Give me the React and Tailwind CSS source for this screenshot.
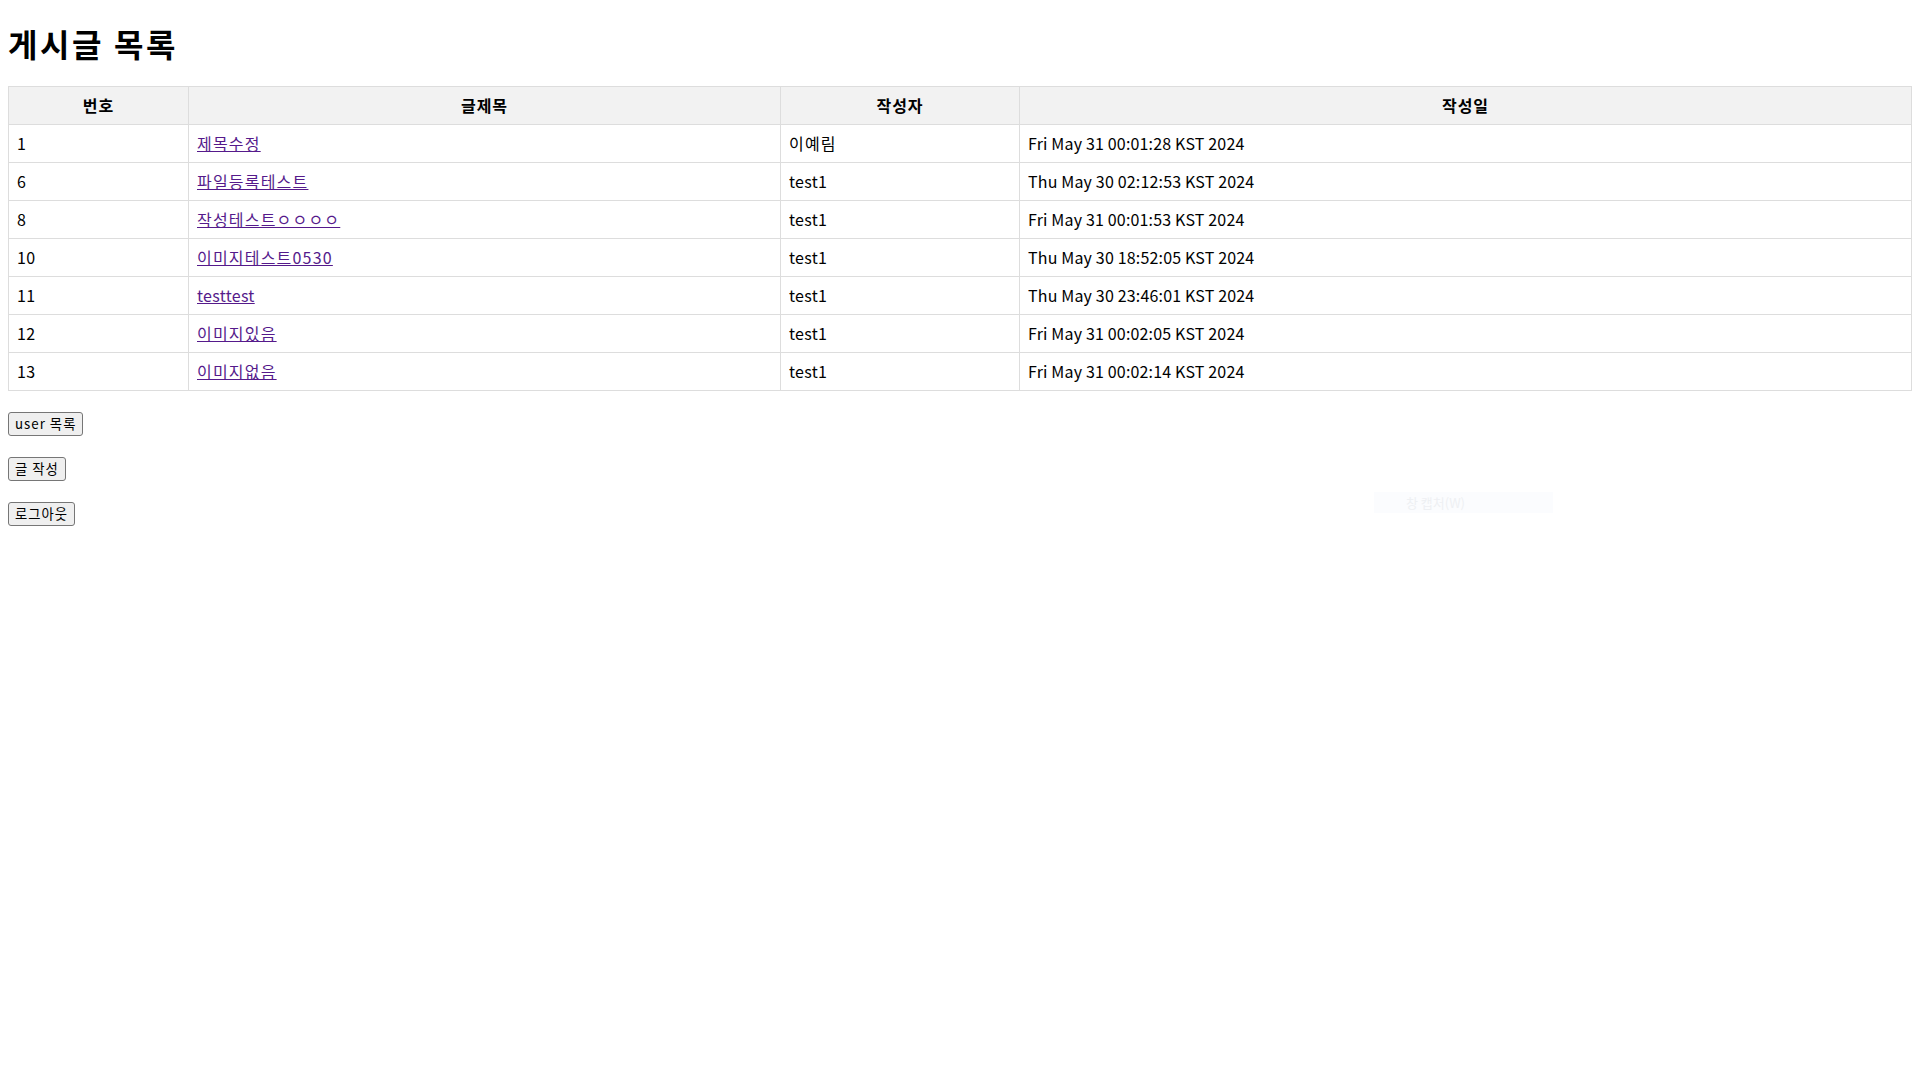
import React from "react";

const rows = [
  { no: 1, title: "제목수정", writer: "이예림", date: "Fri May 31 00:01:28 KST 2024" },
  { no: 6, title: "파일등록테스트", writer: "test1", date: "Thu May 30 02:12:53 KST 2024" },
  { no: 8, title: "작성테스트ㅇㅇㅇㅇ", writer: "test1", date: "Fri May 31 00:01:53 KST 2024" },
  { no: 10, title: "이미지테스트0530", writer: "test1", date: "Thu May 30 18:52:05 KST 2024" },
  { no: 11, title: "testtest", writer: "test1", date: "Thu May 30 23:46:01 KST 2024" },
  { no: 12, title: "이미지있음", writer: "test1", date: "Fri May 31 00:02:05 KST 2024" },
  { no: 13, title: "이미지없음", writer: "test1", date: "Fri May 31 00:02:14 KST 2024" },
];

const font = { fontFamily: '"Noto Sans CJK KR", "Noto Sans", sans-serif' };

// 한글 글자만 Malgun 폭에 맞게 살짝 넓힘
const isKo = (s) => /[\uac00-\ud7a3\u3131-\u318e]/.test(s);

export default function App() {
  return (
    <div className="relative min-h-[1079px] bg-white px-2 text-black" style={font}>
      <h1 className="pt-[22px] pb-[22px] text-[32px] font-bold leading-[42px] tracking-[2.6px]">게시글 목록</h1>

      <table className="w-full border-collapse text-[16px] leading-[21px]">
        <thead>
          <tr className="bg-[#f2f2f2]">
            <th className="w-[180px] border border-[#dddddd] p-2 font-bold tracking-[1px]">번호</th>
            <th className="w-[592px] border border-[#dddddd] p-2 font-bold tracking-[1px]">글제목</th>
            <th className="w-[239px] border border-[#dddddd] p-2 font-bold tracking-[1px]">작성자</th>
            <th className="border border-[#dddddd] p-2 font-bold tracking-[1px]">작성일</th>
          </tr>
        </thead>
        <tbody>
          {rows.map((r) => (
            <tr key={r.no}>
              <td className="border border-[#dddddd] p-2 tracking-[0.3px]">{r.no}</td>
              <td className="border border-[#dddddd] p-2">
                <a href="#" className={`text-[#551a8b] underline ${isKo(r.title) ? "tracking-[1.2px]" : "tracking-[0.3px]"}`}>{r.title}</a>
              </td>
              <td className={`border border-[#dddddd] p-2 ${isKo(r.writer) ? "tracking-[1.2px]" : "tracking-[0.3px]"}`}>{r.writer}</td>
              <td className="border border-[#dddddd] p-2 tracking-[0.17px]">{r.date}</td>
            </tr>
          ))}
        </tbody>
      </table>

      <div className="mt-[21px] flex flex-col items-start gap-[21px]">
        {["user 목록", "글 작성", "로그아웃"].map((b) => (
          <button key={b} className="h-[24px] rounded-[3px] border border-[#767676] bg-[#efefef] px-[6px] text-[13.33px] leading-[16px] tracking-[1px]">
            {b}
          </button>
        ))}
      </div>

      <div className="absolute left-[1374px] top-[492px] flex h-[21px] w-[179px] items-center bg-[#fbfcfe] pl-[32px] text-[13px] text-[#eef0f3]">
        창 캡처(W)
      </div>
    </div>
  );
}
